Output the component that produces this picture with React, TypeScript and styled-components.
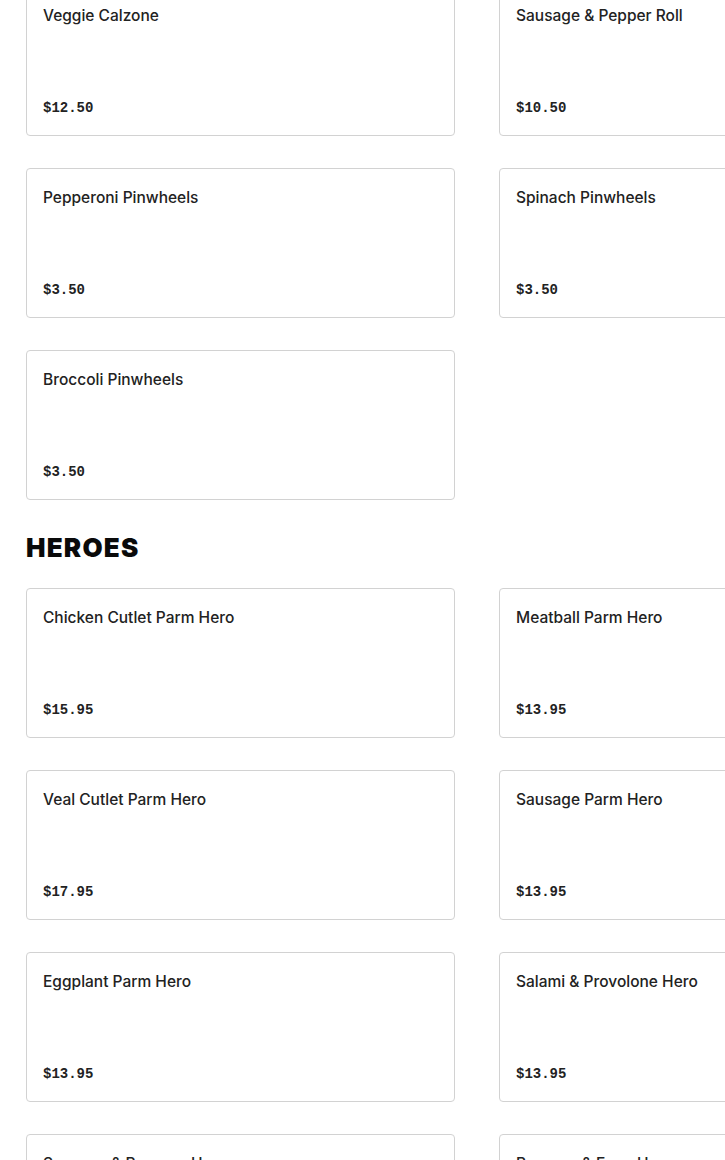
import React, { FC } from 'react';
import styled, { createGlobalStyle } from 'styled-components';

const GlobalStyle = createGlobalStyle`
  html, body {
    margin: 0;
    padding: 0;
    background: #ffffff;
    overflow: hidden;
  }
`;

const StyledPage = styled.div`
  display: flex;
  flex-direction: column;
  padding: 0 0 0 26px;
  margin-top: -14px;
  font-family: Inter, 'Noto Sans', sans-serif;
`;

const StyledSection = styled.section`
  display: flex;
  flex-direction: column;
`;

const StyledHeading = styled.h2`
  margin: 32px 0 24px;
  font-family: Inter, 'Noto Sans', sans-serif;
  font-weight: 900;
  font-size: 26px;
  line-height: 32px;
  letter-spacing: 1.2px;
  color: #0a0a0a;
`;

const StyledGrid = styled.div`
  display: grid;
  grid-template-columns: 429px 429px;
  column-gap: 44px;
  row-gap: 32px;
`;

const StyledCard = styled.div`
  box-sizing: border-box;
  height: 150px;
  display: flex;
  flex-direction: column;
  justify-content: space-between;
  padding: 16px;
  border: 1px solid #d2d2d2;
  border-radius: 4px;
  background: #fff;
`;

const StyledName = styled.div`
  font-size: 15.5px;
  line-height: 26px;
  font-weight: 500;
  color: #222;
`;

const StyledPrice = styled.div`
  font-family: 'Liberation Mono', 'DejaVu Sans Mono', monospace;
  font-size: 14px;
  line-height: 22px;
  font-weight: 700;
  color: #222;
`;

type Item = { name: string; price: string };

const sections: { title?: string; items: Item[] }[] = [
  {
    items: [
      { name: 'Veggie Calzone', price: '$12.50' },
      { name: 'Sausage & Pepper Roll', price: '$10.50' },
      { name: 'Pepperoni Pinwheels', price: '$3.50' },
      { name: 'Spinach Pinwheels', price: '$3.50' },
      { name: 'Broccoli Pinwheels', price: '$3.50' },
    ],
  },
  {
    title: 'HEROES',
    items: [
      { name: 'Chicken Cutlet Parm Hero', price: '$15.95' },
      { name: 'Meatball Parm Hero', price: '$13.95' },
      { name: 'Veal Cutlet Parm Hero', price: '$17.95' },
      { name: 'Sausage Parm Hero', price: '$13.95' },
      { name: 'Eggplant Parm Hero', price: '$13.95' },
      { name: 'Salami & Provolone Hero', price: '$13.95' },
      { name: 'Sausage & Peppers Hero', price: '$13.95' },
      { name: 'Peppers & Eggs Hero', price: '$12.95' },
    ],
  },
];

const MenuCard: FC<Item> = ({ name, price }) => (
  <StyledCard>
    <StyledName>{name}</StyledName>
    <StyledPrice>{price}</StyledPrice>
  </StyledCard>
);

export default function App() {
  return (
    <StyledPage>
      <GlobalStyle />
      {sections.map((section, i) => (
        <StyledSection key={i}>
          {section.title && <StyledHeading>{section.title}</StyledHeading>}
          <StyledGrid>
            {section.items.map((item) => (
              <MenuCard key={item.name} {...item} />
            ))}
          </StyledGrid>
        </StyledSection>
      ))}
    </StyledPage>
  );
}
